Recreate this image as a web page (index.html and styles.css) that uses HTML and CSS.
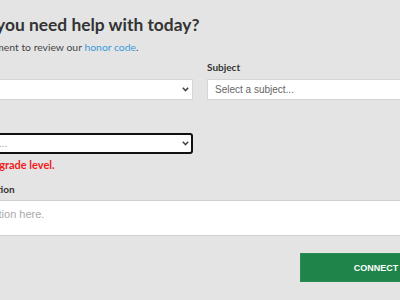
FILE: index.html
```html
<!DOCTYPE html>
<html>
<head>
<meta charset="utf-8">
<link rel="stylesheet" href="styles.css">
</head>
<body>
<div class="wrap">
  <h1 class="title">What do you need help with today?</h1>
  <p class="intro">Please take a moment to review our <a class="link" href="#">honor code</a>.</p>
  <div class="grid">
    <div class="field">
      <label class="label">Topic</label>
      <div class="select-wrap">
        <select class="select"><option>Select one</option></select>
        <svg class="chev" width="7" height="5" viewBox="0 0 7 5"><path d="M0.8 0.8 L3.5 3.6 L6.2 0.8" fill="none" stroke="#444" stroke-width="1.5"/></svg>
      </div>
    </div>
    <div class="field">
      <label class="label">Subject</label>
      <div class="select-wrap">
        <select class="select placeholder"><option>Select a subject...</option></select>
        <svg class="chev" width="7" height="5" viewBox="0 0 7 5"><path d="M0.8 0.8 L3.5 3.6 L6.2 0.8" fill="none" stroke="#444" stroke-width="1.5"/></svg>
      </div>
    </div>
    <div class="field">
      <label class="label">Grade</label>
      <div class="select-wrap">
        <select class="select focused"><option>Select the grade...</option></select>
        <svg class="chev" width="7" height="5" viewBox="0 0 7 5"><path d="M0.8 0.8 L3.5 3.6 L6.2 0.8" fill="none" stroke="#444" stroke-width="1.5"/></svg>
      </div>
      <div class="error">Please choose a grade level.</div>
    </div>
  </div>
  <label class="label desc-label">Type in your question</label>
  <textarea class="textarea" placeholder="Enter the question here."></textarea>
  <div class="actions">
    <button class="btn">CONNECT</button>
  </div>
</div>
</body>
</html>
```

FILE: styles.css
```css
html, body {
  margin: 0;
  background: #e4e4e4;
  overflow: hidden;
}
.wrap {
  margin-left: -81px;
  width: 533px;
  padding-top: 14px;
  font-family: Lato, "Open Sans", sans-serif;
  color: #333;
}
.title {
  margin: 0 0 0 6px;
  font-size: 17.4px;
  line-height: 22px;
  font-weight: 700;
  color: #333;
}
.intro {
  margin: 3px 0 0;
  font-size: 10.4px;
  line-height: 16px;
  color: #444;
}
.link {
  color: #3a9ad9;
  text-decoration: none;
}
.grid {
  margin-top: 5px;
  display: grid;
  grid-template-columns: 274px 1fr;
  column-gap: 14px;
  row-gap: 14px;
}
.field {
  display: flex;
  flex-direction: column;
}
.label {
  display: block;
  font-size: 10px;
  line-height: 15px;
  font-weight: 700;
  color: #333;
  margin-bottom: 4px;
}
.select-wrap {
  position: relative;
}
.select {
  appearance: none;
  -webkit-appearance: none;
  display: block;
  width: 100%;
  height: 21px;
  margin: 0;
  padding: 0 7px;
  border: 1px solid #d6d6d6;
  border-radius: 0;
  background: #fff;
  font-family: "Liberation Sans", Arial, sans-serif;
  font-size: 10px;
  color: #666;
  outline: none;
}
.select.focused {
  border: 2px solid #111;
  border-radius: 3px;
  padding: 0 5px;
  color: #999;
}
.chev {
  position: absolute;
  right: 4px;
  top: 8px;
}
.error {
  margin-top: 4px;
  font-family: Lato, "Open Sans", sans-serif;
  font-size: 11px;
  line-height: 14px;
  font-weight: 700;
  color: #f01a1a;
}
.desc-label {
  margin-top: 10px;
  margin-bottom: 3px;
}
.textarea {
  display: block;
  width: 100%;
  height: 36px;
  box-sizing: border-box;
  margin: 0;
  padding: 6px 8px;
  border: 1px solid #d0d0d0;
  border-width: 1px 0;
  background: #fff;
  resize: none;
  font-family: "Liberation Sans", Arial, sans-serif;
  font-size: 11px;
  line-height: 14px;
  outline: none;
}
.textarea::placeholder {
  color: #aaa;
}
.actions {
  display: flex;
  justify-content: flex-end;
  margin-top: 17px;
}
.btn {
  width: 152px;
  height: 29px;
  background: #1e8449;
  border: 1px solid #2a8c52;
  color: #fff;
  font-family: "Liberation Sans", Arial, sans-serif;
  font-size: 9px;
  font-weight: 700;
  padding: 0;
  text-align: center;
}
```
